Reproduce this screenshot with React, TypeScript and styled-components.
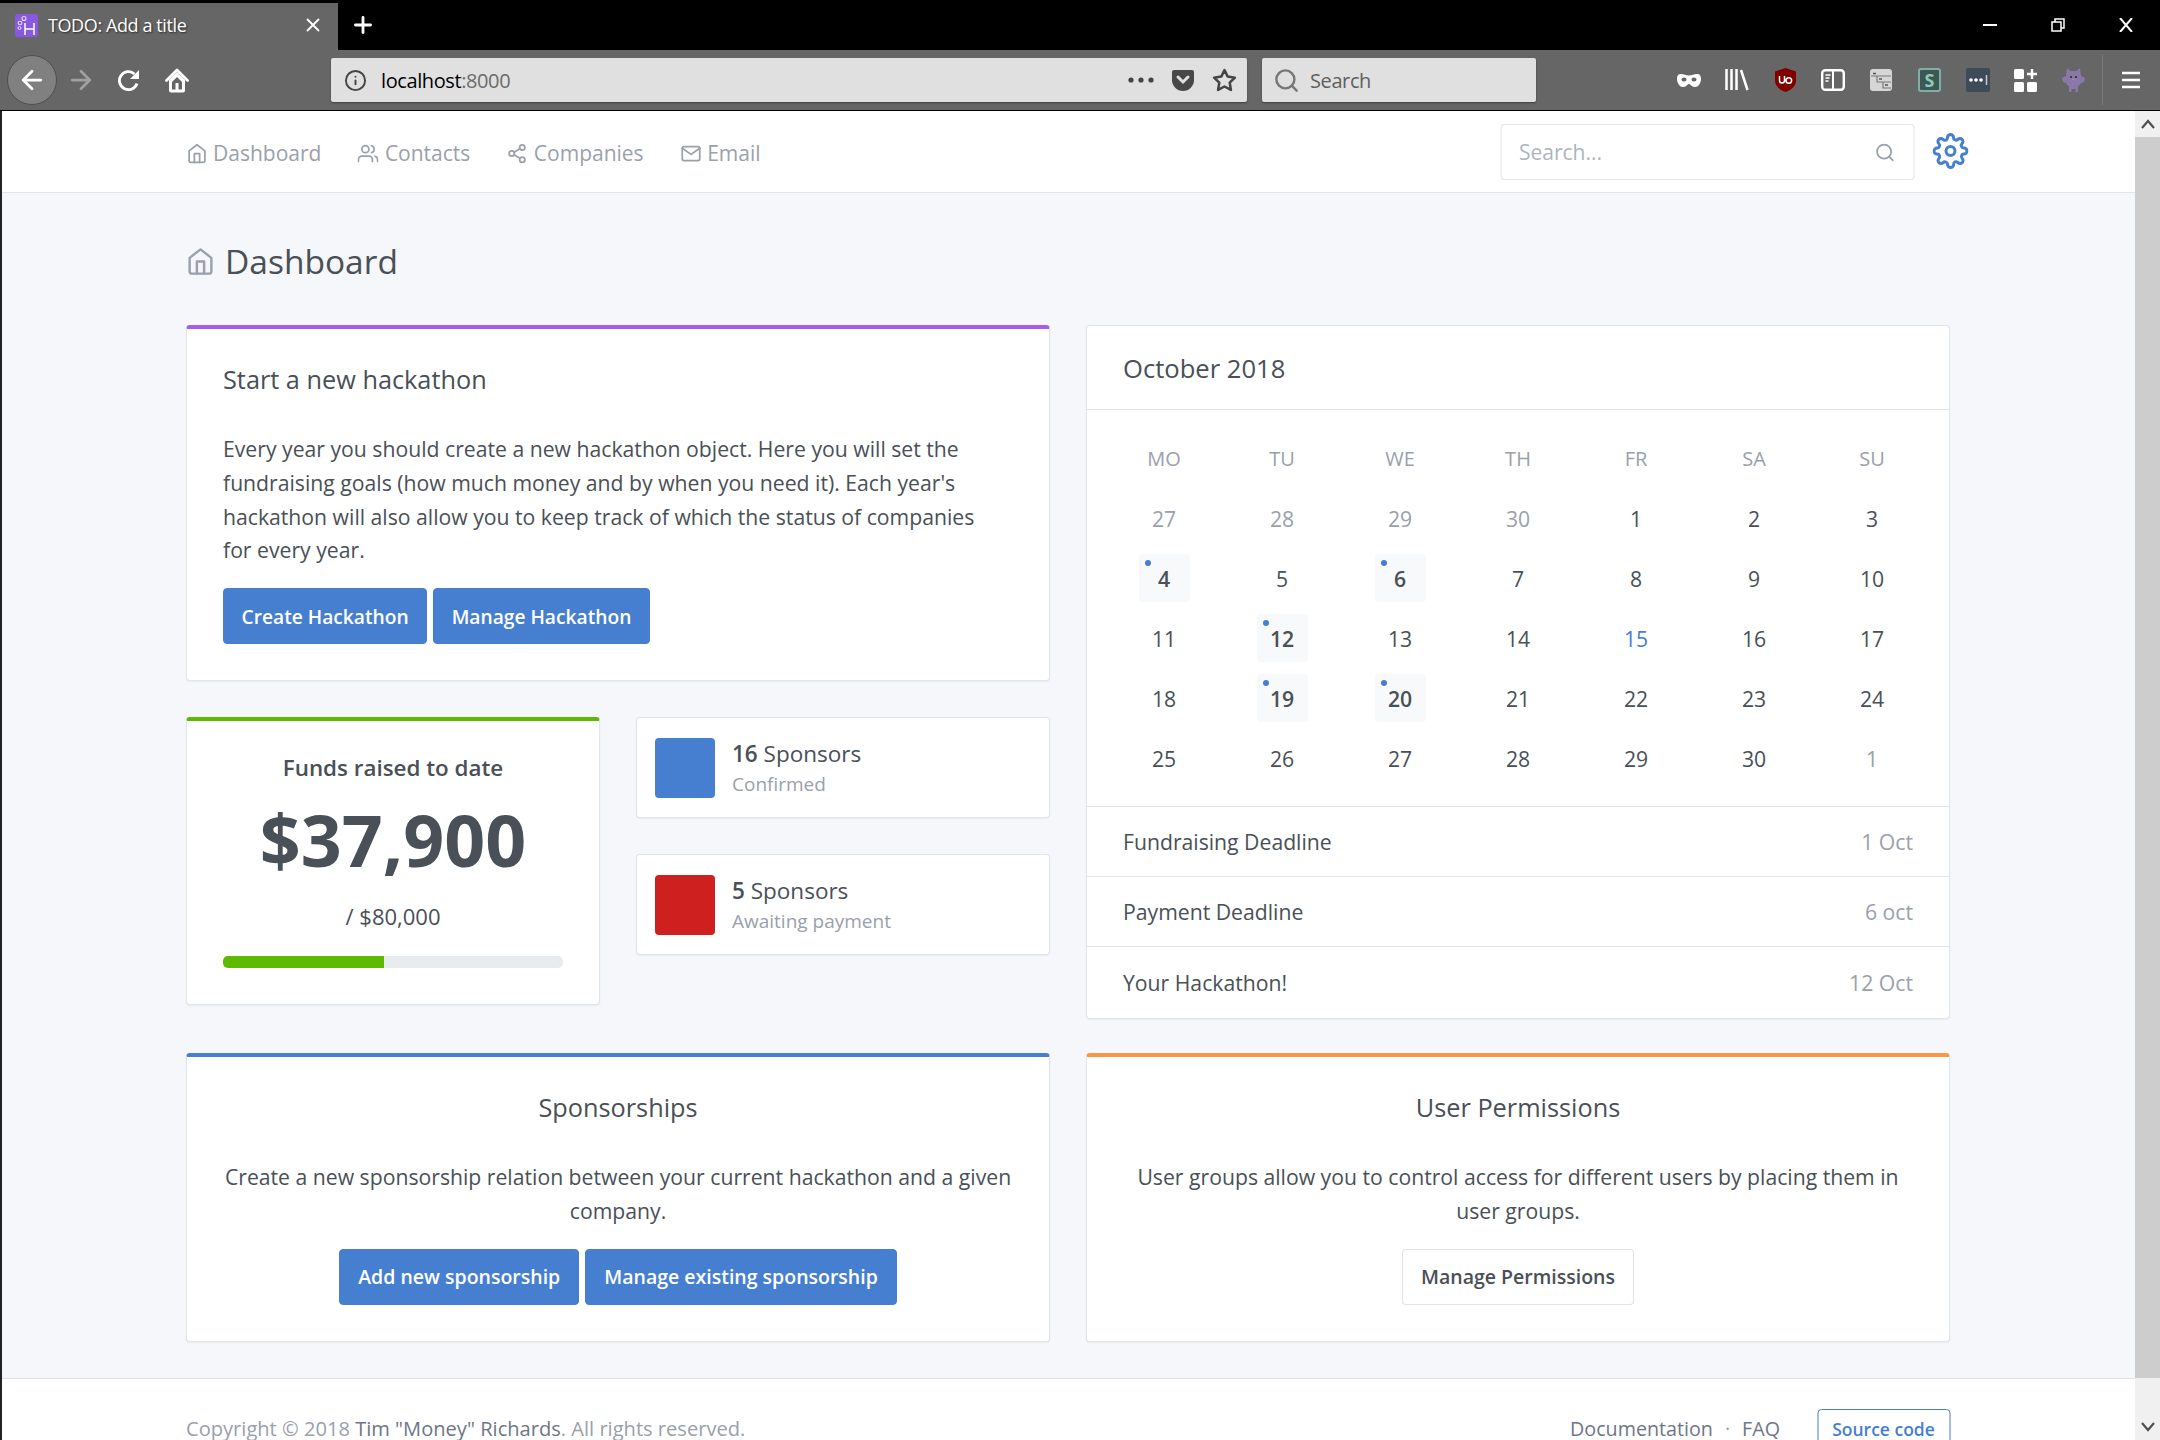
import styled, { createGlobalStyle } from "styled-components";
import {
  FiHome,
  FiUsers,
  FiShare2,
  FiMail,
  FiSearch,
  FiSettings,
  FiInfo,
  FiStar,
  FiX,
  FiPlus,
  FiArrowLeft,
  FiArrowRight,
} from "react-icons/fi";

const FONT = `"Open Sans", "Noto Sans", sans-serif`;

const GlobalStyle = createGlobalStyle`
  html, body {
    margin: 0;
    padding: 0;
    background: #000;
    overflow: hidden;
  }
  * {
    box-sizing: border-box;
  }
`;

const WEEK_DAYS = ["MO", "TU", "WE", "TH", "FR", "SA", "SU"];

type Day = { n: number; muted?: boolean; event?: boolean; today?: boolean };

const DAYS: Day[] = [
  { n: 27, muted: true },
  { n: 28, muted: true },
  { n: 29, muted: true },
  { n: 30, muted: true },
  { n: 1 },
  { n: 2 },
  { n: 3 },
  { n: 4, event: true },
  { n: 5 },
  { n: 6, event: true },
  { n: 7 },
  { n: 8 },
  { n: 9 },
  { n: 10 },
  { n: 11 },
  { n: 12, event: true },
  { n: 13 },
  { n: 14 },
  { n: 15, today: true },
  { n: 16 },
  { n: 17 },
  { n: 18 },
  { n: 19, event: true },
  { n: 20, event: true },
  { n: 21 },
  { n: 22 },
  { n: 23 },
  { n: 24 },
  { n: 25 },
  { n: 26 },
  { n: 27 },
  { n: 28 },
  { n: 29 },
  { n: 30 },
  { n: 1, muted: true },
];

const DEADLINES = [
  { label: "Fundraising Deadline", date: "1 Oct" },
  { label: "Payment Deadline", date: "6 oct" },
  { label: "Your Hackathon!", date: "12 Oct" },
];

function App() {
  return (
    <Screen>
      <GlobalStyle />

      <TabStrip>
        <Tab>
          <TabIcon>
            <svg width="23" height="23" viewBox="0 0 23 23">
              <rect width="23" height="23" rx="3" fill="#8659e0" />
              <circle cx="5" cy="9" r="1.800" fill="none" stroke="#e8dcff" strokeWidth="1.100" />
              <circle cx="9" cy="4.500" r="2" fill="none" stroke="#e8dcff" strokeWidth="1.100" />
              <circle cx="4.500" cy="14" r="1.500" fill="none" stroke="#e8dcff" strokeWidth="1" />
              <path d="M10 9v12M19 9v12M10 15h9" stroke="#fff" strokeWidth="1.500" fill="none" />
            </svg>
          </TabIcon>
          <TabTitle>TODO: Add a title</TabTitle>
          <TabClose>
            <FiX size={22} />
          </TabClose>
        </Tab>
        <NewTab>
          <FiPlus size={26} strokeWidth={2.6} />
        </NewTab>
        <WindowControls>
          <WindowButton>
            <svg width="14" height="14" viewBox="0 0 14 14">
              <path d="M0 7h14" stroke="#fff" strokeWidth="2" />
            </svg>
          </WindowButton>
          <WindowButton>
            <svg width="14" height="14" viewBox="0 0 14 14">
              <path d="M1 4h9v9H1zM4 4V1h9v9h-3" stroke="#fff" strokeWidth="1.500" fill="none" />
            </svg>
          </WindowButton>
          <WindowButton>
            <svg width="14" height="14" viewBox="0 0 14 14">
              <path d="M1 0l12 14M13 0L1 14" stroke="#fff" strokeWidth="2" />
            </svg>
          </WindowButton>
        </WindowControls>
      </TabStrip>

      <Toolbar>
        <BackButton>
          <FiArrowLeft size={30} color="#fff" strokeWidth={2.2} />
        </BackButton>
        <ToolButton>
          <FiArrowRight size={30} color="#a0a0a0" strokeWidth={2.2} />
        </ToolButton>
        <ToolButton>
          <svg width="24" height="24" viewBox="0 0 24 24">
            <path d="M20 15.500a9 9 0 1 1-2.500-9.500" fill="none" stroke="#fff" strokeWidth="2.800" />
            <path d="M22 2v9h-9z" fill="#fff" />
          </svg>
        </ToolButton>
        <ToolButton>
          <svg width="24" height="25" viewBox="0 0 24 25">
            <path
              d="M1.500 12.500L12 2l10.500 10.500"
              fill="none"
              stroke="#fff"
              strokeWidth="2.800"
              strokeLinecap="round"
              strokeLinejoin="round"
            />
            <path
              fillRule="evenodd"
              d="M4 12l8-8 8 8v10.500a2 2 0 0 1-2 2H6a2 2 0 0 1-2-2zM7 14v7.500h3.500V15h3v6.500H17V14l-5-5z"
              fill="#fff"
            />
          </svg>
        </ToolButton>

        <UrlBar>
          <FiInfo size={23} color="#444" />
          <UrlText>
            localhost<UrlPort>:8000</UrlPort>
          </UrlText>
          <UrlActions>
            <svg width="26" height="6" viewBox="0 0 26 6">
              <circle cx="3" cy="3" r="2.600" fill="#444" />
              <circle cx="13" cy="3" r="2.600" fill="#444" />
              <circle cx="23" cy="3" r="2.600" fill="#444" />
            </svg>
            <svg width="24" height="24" viewBox="0 0 24 24">
              <path
                d="M3 2h18a2 2 0 0 1 2 2v8a11 11 0 0 1-22 0V4a2 2 0 0 1 2-2z"
                fill="#484848"
              />
              <path d="M7 9l5 5 5-5" fill="none" stroke="#e0e0e0" strokeWidth="3" strokeLinecap="round" />
            </svg>
            <FiStar size={25} color="#444" strokeWidth={2.4} />
          </UrlActions>
        </UrlBar>

        <SearchBar>
          <FiSearch size={27} color="#777" strokeWidth={2.2} />
          <span>Search</span>
        </SearchBar>

        <Extensions>
          <Extension>
            <svg width="24" height="13" viewBox="0 0 24 13">
              <path
                fillRule="evenodd"
                d="M4 0c3 0 5 1.500 8 1.500S17 0 20 0s4 2 4 5-2 8-6 8-4-3-6-3-2 3-6 3-6-5-6-8 1-5 4-5zM7 3.500c-1.500 0-2.500 1-2.500 2s1 2 2.500 2 2.500-1 2.500-2-1-2-2.500-2zM17 3.500c-1.500 0-2.500 1-2.500 2s1 2 2.500 2 2.500-1 2.500-2-1-2-2.500-2z"
                fill="#fff"
              />
            </svg>
          </Extension>
          <Extension>
            <svg width="24" height="22" viewBox="0 0 24 22">
              <path
                d="M1.500 0v21M6.500 0v21M11.500 0v21M16 1l6.500 20"
                stroke="#fff"
                strokeWidth="2.500"
                fill="none"
              />
            </svg>
          </Extension>
          <Extension>
            <svg width="21" height="24" viewBox="0 0 21 24">
              <path d="M10.500 0L21 3.500V13c0 5-5 9-10.500 11C5 22 0 18 0 13V3.500z" fill="#800000" />
              <path
                d="M4.500 8v4.500a2.500 2.500 0 0 0 5 0V8M11 12.500a2.800 2.800 0 1 0 5.600 0 2.800 2.800 0 1 0-5.600 0"
                fill="none"
                stroke="#fff"
                strokeWidth="1.500"
              />
            </svg>
          </Extension>
          <Extension>
            <svg width="24" height="22" viewBox="0 0 24 22">
              <rect x="1.200" y="1.200" width="21.600" height="19.600" rx="3" fill="none" stroke="#fff" strokeWidth="2.400" />
              <path d="M12 2v18" stroke="#fff" strokeWidth="2" />
              <path d="M4.500 6h5M4.500 9h4M4.500 12h3" stroke="#fff" strokeWidth="1.500" />
            </svg>
          </Extension>
          <Extension>
            <svg width="22" height="22" viewBox="0 0 22 22">
              <rect width="22" height="22" rx="3" fill="#d6d6d6" />
              <path d="M1 7h20M7 7v6h14M13 13v6h8" fill="none" stroke="#777" strokeWidth="1.200" />
              <path d="M3 4.500h3M9 10h3M15 16h3" stroke="#555" strokeWidth="1.500" />
            </svg>
          </Extension>
          <Extension>
            <ScriptBadge>S</ScriptBadge>
          </Extension>
          <Extension>
            <svg width="24" height="24" viewBox="0 0 24 24">
              <rect width="24" height="24" rx="2" fill="#3c4b57" />
              <circle cx="5" cy="12" r="1.800" fill="#fff" />
              <circle cx="10" cy="12" r="1.800" fill="#fff" />
              <circle cx="15" cy="12" r="1.800" fill="#fff" />
              <path d="M20.500 7v10" stroke="#ccc" strokeWidth="1.500" />
            </svg>
          </Extension>
          <Extension>
            <svg width="23" height="23" viewBox="0 0 23 23">
              <rect x="0" y="0" width="10" height="10" rx="1.500" fill="#fff" />
              <rect x="0" y="13" width="10" height="10" rx="1.500" fill="#fff" />
              <rect x="13" y="13" width="10" height="10" rx="1.500" fill="#fff" />
              <path d="M18 0v10M13 5h10" stroke="#fff" strokeWidth="2.500" />
            </svg>
          </Extension>
          <Extension>
            <svg width="23" height="24" viewBox="0 0 23 24">
              <path
                d="M5 0l3.500 3h6L18 0l1 8 4 2-1 4-3 1c-1 2-2 3-3 3v6h-2.500v-3h-4v3H7v-6c-1 0-2-1-3-3l-3-1-1-4 4-2z"
                fill="#8a78a8"
              />
              <circle cx="9" cy="9" r="1.100" fill="#332a44" />
              <circle cx="14" cy="9" r="1.100" fill="#332a44" />
              <circle cx="11.500" cy="11.500" r="0.700" fill="#d88" />
            </svg>
          </Extension>
        </Extensions>
        <ToolbarDivider />
        <MenuButton>
          <svg width="18" height="18" viewBox="0 0 18 18">
            <path d="M0 2h18M0 9h18M0 16h18" stroke="#fff" strokeWidth="2.500" />
          </svg>
        </MenuButton>
      </Toolbar>

      <Viewport>
        <Page>
          <Header>
            <HeaderInner>
              <Nav>
                <NavLink>
                  <FiHome size={21} />
                  Dashboard
                </NavLink>
                <NavLink>
                  <FiUsers size={21} />
                  Contacts
                </NavLink>
                <NavLink>
                  <FiShare2 size={21} />
                  Companies
                </NavLink>
                <NavLink>
                  <FiMail size={21} />
                  Email
                </NavLink>
              </Nav>
              <HeaderSearch>
                <HeaderSearchLabel>Search...</HeaderSearchLabel>
                <FiSearch size={21} color="#9aa0ac" />
              </HeaderSearch>
              <GearLink>
                <FiSettings size={36} color="#467fcf" />
              </GearLink>
            </HeaderInner>
          </Header>

          <Main>
            <PageTitle>
              <FiHome size={29} color="#9aa0ac" />
              Dashboard
            </PageTitle>

            <Columns>
              <LeftColumn>
                <Card $status="#a55eea">
                  <CardBody>
                    <CardHeading>Start a new hackathon</CardHeading>
                    <IntroText>
                      Every year you should create a new hackathon object. Here you will set the
                      fundraising goals (how much money and by when you need it). Each year's
                      hackathon will also allow you to keep track of which the status of companies
                      for every year.
                    </IntroText>
                    <IntroButtons>
                      <Button $primary>Create Hackathon</Button>
                      <Button $primary>Manage Hackathon</Button>
                    </IntroButtons>
                  </CardBody>
                </Card>

                <StatsGrid>
                  <Card $status="#5eba00">
                    <FundsBody>
                      <FundsTitle>Funds raised to date</FundsTitle>
                      <FundsAmount>$37,900</FundsAmount>
                      <FundsGoal>/ $80,000</FundsGoal>
                      <Progress>
                        <ProgressFill style={{ width: `${(37900 / 80000) * 100}%` }} />
                      </Progress>
                    </FundsBody>
                  </Card>
                  <SponsorStack>
                    <SponsorCard>
                      <Swatch $color="#467fcf" />
                      <div>
                        <SponsorName>
                          <b>16</b> Sponsors
                        </SponsorName>
                        <SponsorNote>Confirmed</SponsorNote>
                      </div>
                    </SponsorCard>
                    <SponsorCard>
                      <Swatch $color="#cd201f" />
                      <div>
                        <SponsorName>
                          <b>5</b> Sponsors
                        </SponsorName>
                        <SponsorNote>Awaiting payment</SponsorNote>
                      </div>
                    </SponsorCard>
                  </SponsorStack>
                </StatsGrid>
              </LeftColumn>

              <Card>
                <CalendarHeader>October 2018</CalendarHeader>
                <CalendarGrid>
                  {WEEK_DAYS.map((d) => (
                    <WeekDay key={d}>{d}</WeekDay>
                  ))}
                  {DAYS.map((d, i) => (
                    <DayCell key={i}>
                      <DayBox $muted={d.muted} $event={d.event} $today={d.today}>
                        {d.n}
                      </DayBox>
                    </DayCell>
                  ))}
                </CalendarGrid>
                {DEADLINES.map((d) => (
                  <DeadlineRow key={d.label}>
                    <span>{d.label}</span>
                    <DeadlineDate>{d.date}</DeadlineDate>
                  </DeadlineRow>
                ))}
              </Card>
            </Columns>

            <BottomGrid>
              <Card $status="#467fcf">
                <CenteredBody>
                  <CardHeading>Sponsorships</CardHeading>
                  <Paragraph>
                    Create a new sponsorship relation between your current hackathon and a given
                    company.
                  </Paragraph>
                  <ButtonRow>
                    <Button $primary>Add new sponsorship</Button>
                    <Button $primary>Manage existing sponsorship</Button>
                  </ButtonRow>
                </CenteredBody>
              </Card>
              <Card $status="#fd9644">
                <CenteredBody>
                  <CardHeading>User Permissions</CardHeading>
                  <Paragraph>
                    User groups allow you to control access for different users by placing them in
                    user groups.
                  </Paragraph>
                  <ButtonRow>
                    <Button>Manage Permissions</Button>
                  </ButtonRow>
                </CenteredBody>
              </Card>
            </BottomGrid>
          </Main>

          <Footer>
            <FooterInner>
              <FooterCopy>
                Copyright © 2018 <FooterLink>Tim "Money" Richards</FooterLink>. All rights reserved.
              </FooterCopy>
              <FooterLinks>
                <FooterLink>Documentation</FooterLink>
                <FooterDot>·</FooterDot>
                <FooterLink>FAQ</FooterLink>
                <SourceButton>Source code</SourceButton>
              </FooterLinks>
            </FooterInner>
          </Footer>
        </Page>

        <Scrollbar>
          <ScrollArrow>
            <svg width="14" height="10" viewBox="0 0 14 10">
              <path d="M1 9l6-7 6 7" fill="none" stroke="#505050" strokeWidth="2.200" />
            </svg>
          </ScrollArrow>
          <ScrollThumb />
          <ScrollArrowDown>
            <svg width="14" height="10" viewBox="0 0 14 10">
              <path d="M1 1l6 7 6-7" fill="none" stroke="#505050" strokeWidth="2.200" />
            </svg>
          </ScrollArrowDown>
        </Scrollbar>
      </Viewport>
    </Screen>
  );
}

const Screen = styled.div`
  width: 2160px;
  height: 1440px;
  overflow: hidden;
  display: flex;
  flex-direction: column;
  background: #000;
  font-family: ${FONT};
`;

const TabStrip = styled.div`
  height: 50px;
  flex: none;
  display: flex;
  background: #000;
`;

const Tab = styled.div`
  width: 338px;
  margin-top: 3px;
  padding: 0 14px 3px 15px;
  display: flex;
  align-items: center;
  background: #666;
  color: #fff;
`;

const TabIcon = styled.div`
  display: flex;
  margin-right: 10px;
`;

const TabTitle = styled.div`
  flex: 1;
  font-size: 18px;
  letter-spacing: -0.4px;
  text-shadow: 1px 1px 2px rgba(0, 0, 0, 0.6);
`;

const TabClose = styled.div`
  display: flex;
  color: #fff;
`;

const NewTab = styled.div`
  width: 50px;
  display: flex;
  align-items: center;
  justify-content: center;
  color: #fff;
`;

const WindowControls = styled.div`
  margin-left: auto;
  display: flex;
`;

const WindowButton = styled.div`
  width: 68px;
  display: flex;
  align-items: center;
  justify-content: center;
`;

const Toolbar = styled.div`
  height: 60px;
  flex: none;
  padding-left: 7px;
  display: flex;
  align-items: center;
  background: #666;
`;

const ToolButton = styled.div`
  width: 48px;
  height: 50px;
  flex: none;
  display: flex;
  align-items: center;
  justify-content: center;
`;

const BackButton = styled(ToolButton)`
  width: 50px;
  border-radius: 50%;
  background: #808080;
  border: 1px solid #4d4d4d;
`;

const UrlBar = styled.div`
  width: 916px;
  height: 44px;
  margin-left: 130px;
  flex: none;
  padding: 0 10px 0 13px;
  display: flex;
  align-items: center;
  background: #e0e0e0;
  border-radius: 2px;
  box-shadow: 0 1px 2px rgba(0, 0, 0, 0.4);
`;

const UrlText = styled.div`
  margin-left: 14px;
  font-size: 20px;
  letter-spacing: -0.4px;
  color: #000;
`;

const UrlPort = styled.span`
  color: #6b6b6b;
`;

const UrlActions = styled.div`
  margin-left: auto;
  display: flex;
  align-items: center;
  gap: 17px;
`;

const SearchBar = styled.div`
  width: 274px;
  height: 44px;
  margin-left: 15px;
  flex: none;
  padding-left: 11px;
  display: flex;
  align-items: center;
  gap: 10px;
  background: #e0e0e0;
  border-radius: 2px;
  box-shadow: 0 1px 2px rgba(0, 0, 0, 0.4);
  font-size: 20px;
  letter-spacing: -0.4px;
  color: #5f5f5f;
`;

const Extensions = styled.div`
  margin-left: 129px;
  margin-right: 4px;
  display: flex;
`;

const Extension = styled.div`
  width: 48.1px;
  display: flex;
  align-items: center;
  justify-content: center;
`;

const ScriptBadge = styled.div`
  width: 23px;
  height: 24px;
  display: flex;
  align-items: center;
  justify-content: center;
  background: #3d5755;
  border: 2px solid #7fb0a8;
  border-radius: 3px;
  color: #8fc8bd;
  font-size: 18px;
  line-height: 20px;
  font-weight: 700;
`;

const ToolbarDivider = styled.div`
  width: 1px;
  height: 50px;
  background: #7a7a7a;
`;

const MenuButton = styled.div`
  flex: 1;
  display: flex;
  justify-content: center;
`;

const Viewport = styled.div`
  flex: 1;
  min-height: 0;
  margin-top: 1px;
  display: flex;
  border-left: 2px solid #222;
`;

const Page = styled.div`
  flex: 1;
  min-width: 0;
  padding-right: 1px;
  display: flex;
  flex-direction: column;
  background: #f5f7fb;
  color: #495057;
  font-size: 21.2px;
`;

const Header = styled.header`
  height: 82px;
  flex: none;
  margin-right: -1px;
  background: #fff;
  border-bottom: 1px solid rgba(0, 40, 100, 0.12);
`;

const HeaderInner = styled.div`
  width: 1764px;
  margin: 0 auto;
  padding-top: 13px;
  display: flex;
  transform: translateX(-0.5px);
`;

const Nav = styled.nav`
  display: flex;
  align-items: center;
  gap: 36.5px;
  height: 58px;
  margin-right: auto;
`;

const NavLink = styled.a`
  display: flex;
  align-items: center;
  gap: 6px;
  color: #9aa0ac;
  font-size: 21px;
`;

const HeaderSearch = styled.div`
  width: 414px;
  height: 56px;
  padding: 0 18px;
  display: flex;
  align-items: center;
  justify-content: space-between;
  border: 1px solid rgba(0, 40, 100, 0.12);
  border-radius: 4px;
  background: #fff;
`;

const HeaderSearchLabel = styled.span`
  color: #adb5bd;
  font-size: 21px;
`;

const GearLink = styled.a`
  width: 54px;
  height: 54px;
  display: flex;
  align-items: center;
  justify-content: flex-end;
  margin-right: -18px;
`;

const Main = styled.main`
  width: 1764px;
  flex: none;
  margin: 0 auto;
`;

const PageTitle = styled.h1`
  height: 132px;
  margin: 0;
  padding-top: 4px;
  display: flex;
  align-items: center;
  gap: 10px;
  font-size: 33.5px;
  font-weight: 400;
  color: #495057;
`;

const Columns = styled.div`
  display: grid;
  grid-template-columns: 864px 864px;
  gap: 36px;
`;

const LeftColumn = styled.div`
  display: flex;
  flex-direction: column;
  gap: 36px;
  align-items: stretch;
`;

const Card = styled.section<{ $status?: string }>`
  background: #fff;
  border: 1px solid rgba(0, 40, 100, 0.12);
  ${(p) => (p.$status ? `border-top: 4px solid ${p.$status};` : "")}
  border-radius: 4px;
  box-shadow: 0 1px 2px rgba(0, 0, 0, 0.05);
`;

const CardBody = styled.div`
  padding: 31px 36px 36px;
`;

const CenteredBody = styled(CardBody)`
  text-align: center;
`;

const CardHeading = styled.h3`
  margin: 0 0 34px;
  font-size: 25.3px;
  line-height: 38px;
  font-weight: 400;
`;

const Paragraph = styled.p`
  margin: 0 0 21px;
  line-height: 33.75px;
`;

const IntroText = styled(Paragraph)`
  max-width: 770px;
`;

const ButtonRow = styled.div`
  display: flex;
  gap: 6px;
  ${CenteredBody} & {
    justify-content: center;
  }
`;

const Button = styled.button<{ $primary?: boolean }>`
  height: 56px;
  padding: 0 18px;
  border-radius: 4px;
  border: 1px solid ${(p) => (p.$primary ? "#467fcf" : "rgba(0, 40, 100, 0.12)")};
  background: ${(p) => (p.$primary ? "#467fcf" : "#fff")};
  color: ${(p) => (p.$primary ? "#fff" : "#495057")};
  font-family: ${FONT};
  font-size: 19.5px;
  font-weight: 600;
`;

const IntroButtons = styled(ButtonRow)`
  ${Button} {
    padding: 0 17.5px;
    font-size: 19.2px;
  }
`;

const StatsGrid = styled.div`
  display: grid;
  grid-template-columns: 414px 414px;
  gap: 36px;
  align-items: start;
`;

const FundsBody = styled.div`
  padding: 30px 36px 36px;
  text-align: center;
`;

const FundsTitle = styled.div`
  font-size: 22.4px;
  font-weight: 600;
  line-height: 34px;
`;

const FundsAmount = styled.div`
  margin-top: 9px;
  font-size: 71.7px;
  line-height: 90px;
  font-weight: 700;
`;

const FundsGoal = styled.div`
  margin-top: 15px;
  font-size: 22px;
  line-height: 34px;
`;

const Progress = styled.div`
  height: 12px;
  margin-top: 23px;
  background: #e9ecef;
  border-radius: 5px;
  overflow: hidden;
`;

const ProgressFill = styled.div`
  height: 100%;
  background: #5eba00;
`;

const SponsorStack = styled.div`
  display: flex;
  flex-direction: column;
  gap: 36px;
`;

const SponsorCard = styled(Card)`
  height: 101px;
  padding: 0 18px;
  display: flex;
  align-items: center;
  gap: 17px;
`;

const Swatch = styled.div<{ $color: string }>`
  width: 60px;
  height: 60px;
  flex: none;
  border-radius: 4px;
  background: ${(p) => p.$color};
`;

const SponsorName = styled.div`
  font-size: 22.5px;
  line-height: 33px;
  & b {
    font-weight: 600;
  }
`;

const SponsorNote = styled.div`
  font-size: 19px;
  line-height: 28px;
  color: #9aa0ac;
`;

const CalendarHeader = styled.div`
  height: 84px;
  padding: 2px 36px 0;
  display: flex;
  align-items: center;
  font-size: 25.6px;
  border-bottom: 1px solid rgba(0, 40, 100, 0.12);
`;

const CalendarGrid = styled.div`
  padding: 18px 18px 18px;
  display: grid;
  grid-template-columns: repeat(7, 118px);
  grid-auto-rows: 60px;
  border-bottom: 1px solid rgba(0, 40, 100, 0.12);
`;

const WeekDay = styled.div`
  display: flex;
  align-items: center;
  justify-content: center;
  color: #9aa0ac;
  font-size: 20px;
`;

const DayCell = styled.div`
  display: flex;
  align-items: center;
  justify-content: center;
`;

const DayBox = styled.div<{ $muted?: boolean; $event?: boolean; $today?: boolean }>`
  position: relative;
  width: 51px;
  height: 48px;
  display: flex;
  align-items: center;
  justify-content: center;
  border-radius: 4px;
  font-weight: ${(p) => (p.$event ? 600 : 400)};
  background: ${(p) => (p.$event ? "#f8f9fa" : "transparent")};
  color: ${(p) => (p.$muted ? "#9aa0ac" : p.$today ? "#467fcf" : "#495057")};
  ${(p) =>
    p.$event
      ? `&::before {
    content: "";
    position: absolute;
    top: 6px;
    left: 6px;
    width: 6px;
    height: 6px;
    border-radius: 50%;
    background: #467fcf;
  }`
      : ""}
`;

const DeadlineRow = styled.div`
  height: 70px;
  padding: 0 36px;
  display: flex;
  align-items: center;
  justify-content: space-between;
  border-bottom: 1px solid rgba(0, 40, 100, 0.12);
  &:last-child {
    height: 71px;
    border-bottom: 0;
  }
`;

const DeadlineDate = styled.span`
  color: #9aa0ac;
`;

const BottomGrid = styled.div`
  margin-top: 34px;
  display: grid;
  grid-template-columns: 864px 864px;
  gap: 36px;
`;

const Footer = styled.footer`
  margin-top: 36px;
  margin-right: -1px;
  flex: 1;
  background: #fff;
  border-top: 1px solid rgba(0, 40, 100, 0.12);
`;

const FooterInner = styled.div`
  width: 1764px;
  margin: 0 auto;
  padding-top: 30px;
  display: flex;
  justify-content: space-between;
  color: #9aa0ac;
  font-size: 20.1px;
  transform: translateX(-0.5px);
`;

const FooterCopy = styled.div`
  padding-top: 3px;
  line-height: 34px;
`;

const FooterLink = styled.a`
  color: #6e7687;
`;

const FooterLinks = styled.div`
  display: flex;
  font-size: 19.7px;
  line-height: 34px;
  & > ${FooterLink} {
    margin-top: 3px;
  }
`;

const FooterDot = styled.span`
  margin: 3px 12px 0;
`;

const SourceButton = styled.button`
  width: 133px;
  height: 40px;
  margin-left: 37px;
  padding: 0;
  border: 1px solid #467fcf;
  border-radius: 4px;
  background: #fff;
  color: #467fcf;
  font-family: ${FONT};
  font-size: 17.5px;
  font-weight: 600;
`;

const Scrollbar = styled.div`
  width: 25px;
  flex: none;
  display: flex;
  flex-direction: column;
  background: #f0f0f0;
`;

const ScrollArrow = styled.div`
  height: 26px;
  display: flex;
  align-items: center;
  justify-content: center;
`;

const ScrollArrowDown = styled(ScrollArrow)`
  margin-top: auto;
`;

const ScrollThumb = styled.div`
  height: 1241px;
  background: #cdcdcd;
`;

export default App;
